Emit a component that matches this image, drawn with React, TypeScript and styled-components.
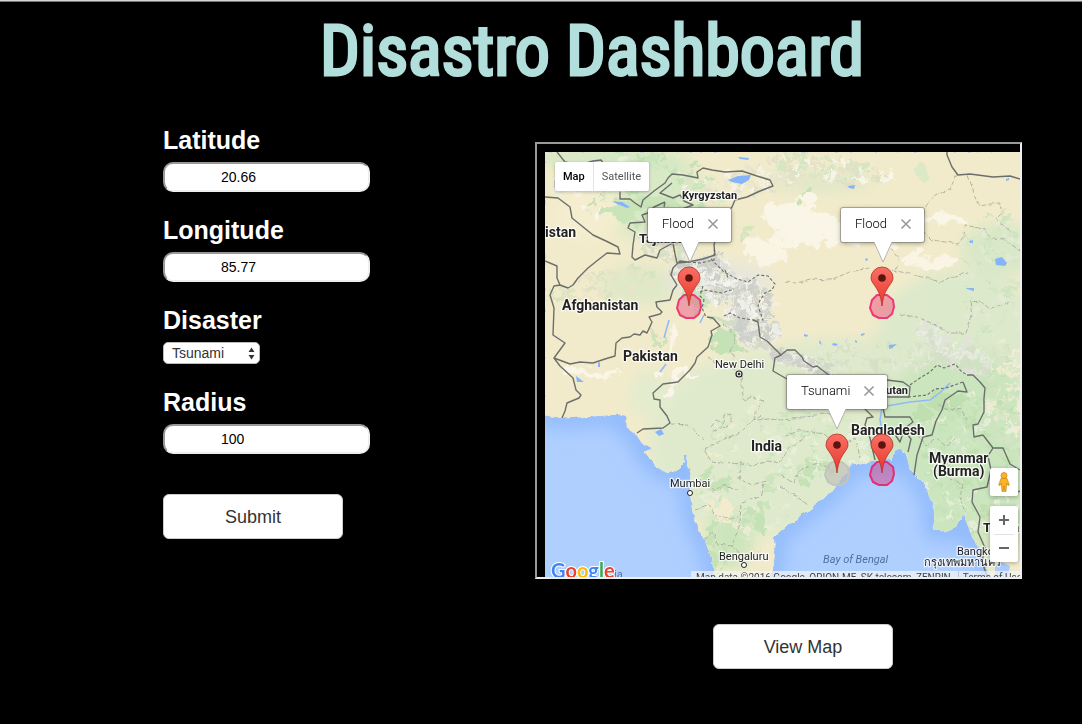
import React from "react";
import styled, { createGlobalStyle } from "styled-components";

const GlobalStyle = createGlobalStyle`
  *, *::before, *::after { box-sizing: border-box; }
  html { background: #000; }
  body { margin: 0; background: #000; font-family: "Liberation Sans", Arial, sans-serif; color: #fff; }
`;

const Page = styled.div`
  min-height: 100vh;
  border-top: 1px solid #d4d4d4;
  box-shadow: inset 0 1px 0 #777;
`;

const Header = styled.header`
  padding: 5px 0 0 102px;
  text-align: center;
`;

const Title = styled.h1`
  margin: 0;
  height: 120px;
  line-height: 90px;
  font-family: "Roboto Condensed", "Liberation Sans Narrow", Roboto, sans-serif;
  font-size: 70px;
  font-weight: 400;
  -webkit-text-stroke: 3px #b2dfdb;
  white-space: nowrap;
  color: #b2dfdb;
`;

const Main = styled.main`
  display: grid;
  grid-template-columns: 372px minmax(0, 1fr);
  padding: 0 60px 55px 163px;
`;

const Form = styled.form`
  display: flex;
  flex-direction: column;
  align-items: flex-start;
  gap: 24px;
`;

const Field = styled.div`
  display: flex;
  flex-direction: column;
  align-items: flex-start;
  gap: 8px;
`;

const Label = styled.label`
  font-size: 25px;
  line-height: 28px;
  font-weight: 700;
`;

const TextInput = styled.input`
  width: 207px;
  height: 30px;
  padding: 0 8px 0 56px;
  border: 2px solid;
  border-color: #9a9797 #eee #eee #9a9797;
  border-radius: 10px;
  background: #fff;
  color: #000;
  font: 14px "Liberation Sans", Arial, sans-serif;
`;

const SelectWrap = styled.div`
  position: relative;
  display: flex;
  svg { position: absolute; right: 5px; top: 5px; pointer-events: none; }
`;

const Select = styled.select`
  appearance: none;
  width: 97px;
  height: 22px;
  padding: 0 18px 0 8px;
  border: 1px solid #bbb;
  border-radius: 5px;
  background: #fff;
  color: #333;
  font: 14px "Liberation Sans", Arial, sans-serif;
`;

const Button = styled.button`
  width: 180px;
  height: 45px;
  padding: 2px 0 0;
  border: 1px solid #ccc;
  border-radius: 6px;
  background: #fff;
  color: #333;
  font: 18px "Liberation Sans", Arial, sans-serif;
`;

const SubmitRow = styled.div`
  padding-top: 16px;
`;

const MapColumn = styled.section`
  padding-top: 16px;
`;

const MapFrame = styled.div`
  padding: 8px 0 0 8px;
  border: 2px solid;
  border-color: #9a9a9a #eee #eee #9a9a9a;
`;

const MapCanvas = styled.div`
  position: relative;
  height: 425px;
  overflow: hidden;
  background: #afcfff;
  font-family: Roboto, sans-serif;
`;

const MapArt = styled.svg`
  display: block;
  width: 100%;
  height: 100%;
`;

const ViewRow = styled.div`
  display: flex;
  justify-content: center;
  padding: 45px 0 0 49px;
`;

const TypeControl = styled.div`
  position: absolute;
  left: 10px;
  top: 10px;
  display: flex;
  height: 29px;
  border-radius: 2px;
  background: #fff;
  box-shadow: 0 1px 3px rgba(0, 0, 0, 0.3);
`;

const TypeButton = styled.button<{ $active?: boolean }>`
  border: 0;
  padding: 0 8px;
  background: transparent;
  font: ${(p) => (p.$active ? 500 : 400)} 11px Roboto, sans-serif;
  color: ${(p) => (p.$active ? "#000" : "#565656")};
  & + & { border-left: 1px solid #e4e4e4; }
`;

const InfoWindow = styled.div<{ $x: number; $y: number; $w: number }>`
  position: absolute;
  left: ${(p) => p.$x}px;
  top: ${(p) => p.$y}px;
  width: ${(p) => p.$w}px;
  height: 34px;
  display: flex;
  align-items: center;
  justify-content: space-between;
  padding: 0 12px 3px 14px;
  border-radius: 2px;
  background: #fff;
  box-shadow: 0 0 0 1px rgba(90, 90, 90, 0.4), 0 1px 5px rgba(0, 0, 0, 0.4);
  color: #000;
  font-size: 13px;
  font-weight: 300;
`;

const Tail = styled.svg`
  position: absolute;
  left: calc(50% - 9px);
  top: 34px;
`;

const CloseButton = styled.button`
  display: flex;
  padding: 0;
  border: 0;
  background: none;
`;

const SideControls = styled.div`
  position: absolute;
  right: 2px;
  top: 316px;
  display: flex;
  flex-direction: column;
  gap: 10px;
`;

const ControlBox = styled.div`
  display: flex;
  flex-direction: column;
  width: 28px;
  border-radius: 2px;
  background: #fff;
  box-shadow: 0 1px 4px rgba(0, 0, 0, 0.3);
`;

const ControlButton = styled.button`
  display: flex;
  align-items: center;
  justify-content: center;
  height: 28px;
  padding: 0;
  border: 0;
  background: none;
`;

const Divider = styled.span`
  height: 1px;
  margin: 0 4px -1px;
  background: #e2e2e2;
`;

const Attribution = styled.div`
  position: absolute;
  right: 0;
  bottom: -8px;
  display: flex;
  gap: 7px;
  width: 329px;
  height: 14px;
  padding-left: 5px;
  background: rgba(245, 245, 245, 0.7);
  color: #444;
  font-size: 10px;
  line-height: 14px;
  white-space: nowrap;
  a { color: #444; text-decoration: none; padding-left: 4px; border-left: 1px solid #b9c4d6; }
`;

const LAND =
  "M545 152H1400V577H990L987 566L980 548L973 538L968 525L963 513L957 525L945 532L933 528L936 518L933 505L928 495L925 485L917 477L910 468L907 455L900 448L895 450L890 461L884 456L880 463L873 460L862 464L852 463L848 472L837 483L830 493L820 500L810 509L800 515L794 523L787 525L780 531L773 538L775 548L773 568L770 577H715L712 558L707 545L697 525L693 512L690 492L691 472L687 465V455H683L684 461L680 467L674 471L668 473L657 467L645 452L653 448L642 443L637 435L627 428V418L620 414L580 417L563 418L545 415Z";

const BORDERS = [
  "M557 152L565 162L580 165L593 161L601 160L610 172L620 190V199H630L635 203L641 207L643 200L654 191L665 183L668 178L672 174L683 175L698 178L697 172L703 168L712 170L725 172L742 171L757 176L770 180L773 186L760 191L747 197L735 200L732 207L724 216L718 230L714 245L715 255L703 259L688 262L680 261L673 268L671 275L677 285",
  "M672 183L660 193L673 198L680 195L684 201L693 205L682 209L700 210",
  "M665 202L654 207L648 213L642 215L645 222L630 223L628 228L635 232L633 245L632 257L635 260L645 255L657 258L660 250L673 243L675 254L677 263L688 262M665 202L664 207",
  "M545 197L558 198L570 207L572 218L593 235L606 241L618 247L620 254L607 253L598 260L588 268L578 278L573 285L568 288L560 285L557 278V266L545 261",
  "M560 285L554 286L550 295L554 308L553 335L565 343L554 358L560 366L573 378L576 390L581 395L579 398L567 403L565 411L562 418",
  "M554 358L570 364L580 362L593 363L605 359L615 356L616 343L622 338L630 337L634 334L640 335L643 331L647 333L652 322L649 317L660 314L662 312L657 307L656 302L670 300L673 290L677 285",
  "M707 317L713 318L720 326L711 331L712 335L708 347L697 357L695 363L690 370L684 376L678 382L663 384L653 393L654 399L660 400V407L667 416L670 423L663 428L643 429L637 433",
  "M753 320L758 322L760 337L767 341L771 345L781 355L787 350L795 350L802 357L804 361L813 367L817 366L830 376L845 380L864 384L883 386L887 380L903 382L910 387L909 397H887L884 390",
  "M781 355L775 358L773 371L787 379L800 391L830 399L850 403L864 408L873 417L867 418L865 425L870 438L875 460",
  "M883 408L885 417L910 417L913 422L905 428M967 375L973 375L980 382L985 388L984 398V412L978 424L973 425L974 437L983 435",
  "M963 382L967 392L958 391L945 400L942 410L936 421L932 435L923 437L917 455L914 475M894 433L900 442L904 430L911 439L908 452",
  "M983 435L993 448L988 456L991 470L987 487L973 490L972 502L980 517L978 532L985 548L982 561L987 577M1020 470L1010 464L1003 448L993 448M1020 491L1012 495L1009 487",
  "M947 152V155L952 167L958 175L970 174L993 177L1010 176L1020 179",
];

const DASHED = [
  "M688 262L700 263L714 260L714 250M711 259L724 272L737 279L748 282L758 275L768 276L775 284L772 290L765 293L760 300L758 306L763 320L753 320",
  "M700 292L704 290L722 293L734 289M725 270L728 278M703 286L700 296L704 300L702 308L706 317M724 316L730 313L740 318L753 320",
  "M910 385L920 378L930 372L937 365L944 368L955 364L961 371L967 375",
  "M908 397L927 395L935 389L946 388L963 382",
];

const PROVINCES = [
  "M957 175L949 190L935 195L926 206L923 218M968 175L974 193L980 206L990 204L1000 204L1002 213L996 219L1011 232",
  "M924 232L932 240L945 242L958 244L964 236L965 225L983 229L991 238L1004 239L1020 251",
  "M785 282L797 283L810 279L830 280L850 272L869 268M890 248L898 258L897 268L892 270L915 275L941 282L954 276L968 273",
  "M900 314L920 318L933 324L949 333L966 333L972 316L970 302L980 301L990 309L1010 302",
  "M707 357L716 362L724 361L741 375L742 389L744 401L751 397L763 402L755 412L754 420L769 419L780 420L803 418L815 415L833 413",
  "M724 324L736 337L731 350L734 360",
  "M711 427L716 421L723 424L724 415L731 414V421L727 427L719 428L712 432M671 424L687 425L697 434L704 440",
  "M704 450L718 442L742 431L752 421L761 416M704 450L711 461L742 464L752 466L768 461L780 463L789 448L806 437",
  "M742 461L739 479L752 485L765 481L760 496L741 502L740 524L732 546L744 557L762 551",
  "M784 437L800 430L824 434L838 446L856 438L860 458M781 475L793 483L800 470L817 463L830 468M780 486L797 497L808 505",
  "M700 479L716 491L723 485L739 491M696 510L709 504L714 514L731 519L741 514M704 540L713 532L718 544L732 546",
  "M917 434L926 446L935 438L946 446L955 439M950 479L963 484L960 497L965 512M938 404L950 411L961 408L967 420",
];

/* Land cover, from broad ground colour to smaller patches: x, y, rx, ry, fill. */
type Patch = [number, number, number, number, string];
const GROUND: Patch[] = [
  [760, 445, 110, 92, "#dfeacd"], [850, 380, 120, 42, "#dfe9cb"], [960, 340, 85, 70, "#dde9cb"],
  [960, 460, 90, 110, "#cbe5be"], [645, 195, 60, 42, "#d8e9c5"], [1000, 250, 40, 28, "#d9e8c8"],
  [650, 395, 22, 26, "#e4ecce"], [640, 285, 40, 20, "#dfe8c8"], [610, 158, 80, 10, "#d3e7c4"],
  [590, 213, 34, 26, "#f4edcf"], [820, 182, 55, 12, "#e2e8c9"], [720, 280, 55, 20, "#e8e7da"],
  [745, 325, 20, 22, "#e5e7d8"], [985, 540, 15, 32, "#d3e6bf"], [730, 540, 24, 30, "#cde5bd"],
];
const PATCHES: Patch[] = [
  [800, 222, 34, 22, "#faf6e7"], [850, 232, 60, 12, "#faf6e7"], [940, 219, 26, 5, "#faf6e7"],
  [930, 262, 26, 7, "#f9f4e3"], [765, 250, 24, 14, "#f9f4e3"], [890, 178, 9, 4, "#faf6e7"],
  [575, 180, 15, 10, "#f8f2df"], [600, 214, 10, 5, "#faf6e7"], [590, 373, 36, 5, "#faf5e6"],
  [683, 375, 20, 4, "#faf5e6"], [668, 392, 8, 12, "#faf5e6"], [670, 335, 4, 14, "#faf5e6"],
  [721, 344, 12, 10, "#c5e1b6"], [735, 348, 8, 5, "#c5e1b6"], [708, 470, 9, 7, "#c5e1b6"],
  [718, 486, 10, 7, "#c5e1b6"], [755, 524, 14, 9, "#c5e1b6"], [766, 512, 9, 12, "#c5e1b6"],
  [716, 508, 13, 8, "#f2ebcd"], [722, 518, 10, 4, "#f2ebcd"], [714, 455, 6, 3, "#f2ebcd"],
  [710, 535, 5, 12, "#c5e1b6"], [720, 560, 6, 14, "#c5e1b6"], [620, 213, 20, 8, "#cae4ba"],
  [655, 205, 22, 10, "#cae4ba"], [640, 165, 26, 7, "#cae4ba"], [920, 172, 8, 8, "#dbe9c6"],
  [802, 196, 5, 5, "#c8e2b6"], [743, 235, 3, 9, "#d5e6bf"], [820, 465, 14, 7, "#c5e1b6"],
  [806, 482, 10, 6, "#c5e1b6"], [945, 400, 18, 5, "#bfdfb0"], [925, 415, 10, 8, "#bfdfb0"],
  [655, 338, 3, 8, "#cce2b8"], [700, 300, 10, 14, "#cde3bd"], [725, 320, 22, 5, "#cfe2c0"],
];

/* Deterministic noise so the relief looks the same on every render. */
function makeRandom(seed: number) {
  let s = seed;
  return () => {
    s = (s * 16807) % 2147483647;
    return s / 2147483647;
  };
}

type Relief = { x: number; y: number; rx: number; ry: number; n: number; tilt: number; colors: string[] };
const SNOW = ["#f8f8f5", "#d6d8d2", "#ccd2c4", "#f1f0ea", "#c9cbc5"];
const GREEN = ["#bddfaf", "#c4e2b6", "#eaf0dd", "#d3e8c5"];
const RELIEF: Relief[] = [
  { x: 722, y: 285, rx: 50, ry: 19, n: 240, tilt: 0.45, colors: SNOW },
  { x: 750, y: 325, rx: 32, ry: 18, n: 130, tilt: 0.8, colors: SNOW },
  { x: 695, y: 266, rx: 28, ry: 10, n: 60, tilt: -0.2, colors: SNOW },
  { x: 735, y: 182, rx: 56, ry: 14, n: 90, tilt: -0.1, colors: ["#e8e5cf", "#f8f5e8", "#dee0c6"] },
  { x: 825, y: 168, rx: 60, ry: 12, n: 110, tilt: 0.15, colors: ["#d8e4c5", "#cfe4bf", "#faf7ec", "#e3ddc4"] },
  { x: 800, y: 362, rx: 36, ry: 7, n: 70, tilt: 0.3, colors: SNOW },
  { x: 880, y: 357, rx: 75, ry: 14, n: 90, tilt: 0, colors: ["#d9e0c8", "#e6eadb", "#d4dec4"] },
  { x: 952, y: 350, rx: 45, ry: 16, n: 110, tilt: 0.6, colors: ["#ecece5", "#d6dccb", "#e1e4d8"] },
  { x: 1002, y: 390, rx: 20, ry: 50, n: 90, tilt: 0, colors: ["#f8eed7", "#c6e1b8", "#dae2c9", "#f2edd5"] },
  { x: 595, y: 285, rx: 60, ry: 14, n: 70, tilt: -0.2, colors: ["#dfe4c6", "#d4e2be", "#ebe4c8"] },
  { x: 665, y: 240, rx: 28, ry: 20, n: 80, tilt: 0, colors: ["#e9e9df", "#d8dccb", "#cae1ba"] },
  { x: 970, y: 465, rx: 55, ry: 75, n: 200, tilt: 0, colors: GREEN },
  { x: 640, y: 190, rx: 90, ry: 36, n: 60, tilt: 0, colors: GREEN },
  { x: 745, y: 470, rx: 50, ry: 75, n: 80, tilt: 0, colors: ["#c8e3b9", "#d3e7c4", "#eeedd5", "#e8eeda"] },
  { x: 810, y: 445, rx: 55, ry: 34, n: 70, tilt: 0, colors: ["#c8e3b9", "#eaf0dd", "#d3e7c4"] },
  { x: 990, y: 280, rx: 35, ry: 70, n: 80, tilt: 0, colors: ["#cae2bd", "#d3e6c5", "#e5ebd8"] },
];

function reliefPaths() {
  const random = makeRandom(4127);
  return RELIEF.flatMap((r, k) => {
    const paths = r.colors.map(() => "");
    for (let i = 0; i < r.n; i += 1) {
      const a = random() * Math.PI * 2;
      const d = Math.sqrt(random());
      const u = Math.cos(a) * d * r.rx;
      const v = Math.sin(a) * d * r.ry;
      const x = (r.x + u * Math.cos(r.tilt) - v * Math.sin(r.tilt)).toFixed(1);
      const y = (r.y + u * Math.sin(r.tilt) + v * Math.cos(r.tilt)).toFixed(1);
      const w = 2 + random() * 6;
      const h = 2 + random() * 4;
      paths[i % r.colors.length] += `M${x} ${y}l${w.toFixed(1)} ${(-h / 2).toFixed(1)}l${(w / 2).toFixed(1)} ${h.toFixed(1)}l${(-w).toFixed(1)} ${(h / 2).toFixed(1)}z`;
    }
    return paths.map((d, j) => <path key={`${k}-${j}`} d={d} fill={r.colors[j]} opacity="0.8" />);
  });
}

const WATER =
  "M728 180L738 176L751 175L749 180L742 184L732 182ZM612 201L622 202L630 207L627 208L617 204ZM738 157L749 158L748 160L740 159ZM848 186L855 185L854 189L849 188ZM995 259L1002 257L1007 263L1005 266L996 265ZM969 241L973 240V243H970ZM889 345L897 344L892 348L889 349ZM833 343L838 344L836 346L832 345ZM846 342L848 337L845 343ZM861 334L865 333L864 335L861 336ZM966 288H974V291L967 289ZM576 376L584 382H577ZM598 363L600 362V367H598ZM655 432L661 429L664 434L659 436ZM866 258L868 259L867 261L865 260ZM1006 179L1009 178V180L1006 181ZM855 340L857 341V343L855 342ZM804 334L808 335L807 337L804 336ZM820 340L822 345L819 343Z";

type Place = { text: string; x: number; y: number; size: number; kind?: "city" | "end" };
const PLACES: Place[] = [
  { text: "Uzbekistan", x: 554, y: 191, size: 14 },
  { text: "Turkmenistan", x: 576, y: 237, size: 14, kind: "end" },
  { text: "Kyrgyzstan", x: 682, y: 199, size: 11 },
  { text: "Tajikistan", x: 639, y: 243, size: 13 },
  { text: "Afghanistan", x: 562, y: 310, size: 14 },
  { text: "Pakistan", x: 623, y: 361, size: 14 },
  { text: "India", x: 751, y: 451, size: 14 },
  { text: "Bhutan", x: 908, y: 394, size: 11, kind: "end" },
  { text: "Bangladesh", x: 851, y: 435, size: 14 },
  { text: "Myanmar", x: 929, y: 463, size: 14 },
  { text: "(Burma)", x: 933, y: 476, size: 14 },
  { text: "Thailand", x: 983, y: 532, size: 13 },
  { text: "New Delhi", x: 715, y: 368, size: 11, kind: "city" },
  { text: "Mumbai", x: 670, y: 487, size: 11, kind: "city" },
  { text: "Bengaluru", x: 719, y: 560, size: 11, kind: "city" },
  { text: "Bangkok", x: 957, y: 555, size: 11, kind: "city" },
  { text: "กรุงเทพมหานคร", x: 924, y: 566, size: 11, kind: "city" },
];

const PIN = "M0 0C-1 -9 -3 -14 -7 -20C-9 -23 -11 -25 -11 -28A11 11 0 0 1 11 -28C11 -25 9 -23 7 -20C3 -14 1 -9 0 0Z";

type Spot = { x: number; y: number; fill: string; stroke: string };
const SPOTS: Spot[] = [
  { x: 689, y: 306, fill: "rgba(233,87,131,.5)", stroke: "#ee3a74" },
  { x: 882, y: 306, fill: "rgba(240,80,125,.5)", stroke: "#ee3a74" },
  { x: 837, y: 473, fill: "rgba(190,190,185,.65)", stroke: "#c3c5bc" },
  { x: 882, y: 473, fill: "rgba(215,70,135,.5)", stroke: "#e22f76" },
];

const GOOGLE: [string, string][] = [
  ["G", "#4285f4"], ["o", "#ea4335"], ["o", "#fbbc05"], ["g", "#4285f4"], ["l", "#34a853"], ["e", "#ea4335"],
];

function ellipses(list: Patch[]) {
  return list.map(([x, y, rx, ry, fill], i) => <ellipse key={i} cx={x} cy={y} rx={rx} ry={ry} fill={fill} />);
}

function Terrain() {
  return (
    <MapArt aria-label="Map of South Asia">
      <defs>
        <clipPath id="land"><path d={LAND} /></clipPath>
        <filter id="ground" x="-20%" y="-20%" width="140%" height="140%"><feGaussianBlur stdDeviation="7" /></filter>
        <filter id="shore" x="-20%" y="-20%" width="140%" height="140%"><feGaussianBlur stdDeviation="10" /></filter>
        <filter id="patch">
          <feTurbulence type="fractalNoise" baseFrequency="0.05" numOctaves="4" seed="3" />
          <feDisplacementMap in="SourceGraphic" scale="34" xChannelSelector="R" yChannelSelector="G" />
          <feGaussianBlur stdDeviation="0.5" />
        </filter>
        <filter id="relief">
          <feTurbulence type="fractalNoise" baseFrequency="0.14" numOctaves="3" seed="8" />
          <feDisplacementMap in="SourceGraphic" scale="14" xChannelSelector="R" yChannelSelector="G" />
          <feGaussianBlur stdDeviation="0.5" />
        </filter>
        <filter id="coast">
          <feTurbulence type="fractalNoise" baseFrequency="0.15" numOctaves="2" seed="5" />
          <feDisplacementMap in="SourceGraphic" scale="4" xChannelSelector="R" yChannelSelector="G" />
        </filter>
        <linearGradient id="pin" x1="0" y1="0" x2="0" y2="1">
          <stop offset="0" stopColor="#fb7064" />
          <stop offset="1" stopColor="#e6352b" />
        </linearGradient>
      </defs>
      <g transform="translate(-545 -152)">
        <path d={LAND} fill="none" stroke="#8cb7fb" strokeWidth="18" filter="url(#shore)" />
        <g filter="url(#coast)">
          <path d={LAND} fill="#f2ebcb" stroke="#f2ebcb" />
          <g clipPath="url(#land)">
            <g filter="url(#ground)">{ellipses(GROUND)}</g>
            <g filter="url(#patch)">{ellipses(PATCHES)}</g>
            <g filter="url(#relief)">{reliefPaths()}</g>
          </g>
        </g>
        <path d="M995 577V566L1002 562L1010 566L1008 577Z" fill="#a9cbff" />
        <path d={WATER} fill="#86b4fb" />
        <path d="M882 408L880 420L882 430L886 437M887 406L910 402L930 400L942 391L950 383M664 338L669 320M660 372L666 364M700 323L704 315" fill="none" stroke="#8fbaf8" strokeWidth="1.5" />
        <path d={PROVINCES.join("")} fill="none" stroke="#a3a59a" strokeWidth="0.8" strokeDasharray="5 2" filter="url(#coast)" />
        <path d={BORDERS.join("")} fill="none" stroke="#6c6e6a" strokeWidth="1.4" strokeLinejoin="round" />
        <path d={DASHED.join("")} fill="none" stroke="#6c6e6a" strokeWidth="1.1" strokeDasharray="3 2" />
        {PLACES.map((p) => (
          <text
            key={p.text}
            x={p.x}
            y={p.y}
            fontSize={p.size}
            fontWeight={p.kind === "city" ? 400 : 700}
            textAnchor={p.kind === "end" ? "end" : "start"}
            fill="#222"
            stroke="#fff"
            strokeOpacity="0.75"
            strokeWidth="2.5"
            strokeLinejoin="round"
            paintOrder="stroke"
          >
            {p.text}
          </text>
        ))}
        <text x="823" y="563" fontSize="11" fontStyle="italic" fill="#4f709f">Bay of Bengal</text>
        <text x="614" y="578" fontSize="11" fill="#4f709f">ia</text>
        <g fill="#fff" stroke="#222">
          <circle cx="739" cy="374" r="3" strokeWidth="1.2" />
          <circle cx="739" cy="374" r="1" fill="#222" />
          <circle cx="690" cy="493" r="2.5" />
          <circle cx="744" cy="565" r="2.5" />
        </g>
        {SPOTS.map((s) => (
          <g key={`${s.x}-${s.y}`} transform={`translate(${s.x} ${s.y})`}>
            <path
              d="M-5 -11L5 -11L11 -6L12 1L10 8L5 12L-3 12L-9 9L-12 2L-10 -6Z"
              fill={s.fill}
              stroke={s.stroke}
              strokeWidth="2"
              strokeLinejoin="round"
            />
            <path d={PIN} fill="url(#pin)" stroke="#b0342b" strokeWidth="0.8" />
            <circle cy="-28" r="3.8" fill="#5c1411" />
          </g>
        ))}
        <text x="551" y="578" fontSize="20" fontFamily="Lato, sans-serif" fontWeight="700" stroke="#fff" strokeWidth="2" paintOrder="stroke">
          {GOOGLE.map(([c, fill], i) => <tspan key={i} fill={fill}>{c}</tspan>)}
        </text>
      </g>
    </MapArt>
  );
}

function Info({ text, x, y, w }: { text: string; x: number; y: number; w: number }) {
  return (
    <InfoWindow $x={x} $y={y} $w={w}>
      {text}
      <CloseButton type="button" aria-label={`Close ${text}`}>
        <svg width="12" height="12" viewBox="0 0 12 12" stroke="#999" strokeWidth="1.6"><path d="M1.5 1.5L10.5 10.5M10.5 1.5L1.5 10.5" /></svg>
      </CloseButton>
      <Tail width="18" height="21" viewBox="0 0 18 21">
        <path d="M0 0L9 20L18 0" fill="#fff" stroke="#999" strokeWidth="0.7" />
        <path d="M1 -1H17V1H1Z" fill="#fff" />
      </Tail>
    </InfoWindow>
  );
}

function NumberField({ id, label, value }: { id: string; label: string; value: string }) {
  return (
    <Field>
      <Label htmlFor={id}>{label}</Label>
      <TextInput id={id} defaultValue={value} />
    </Field>
  );
}

export default function App() {
  return (
    <Page>
      <GlobalStyle />
      <Header><Title>Disastro Dashboard</Title></Header>
      <Main>
        <Form onSubmit={(e) => e.preventDefault()}>
          <NumberField id="latitude" label="Latitude" value="20.66" />
          <NumberField id="longitude" label="Longitude" value="85.77" />
          <Field>
            <Label htmlFor="disaster">Disaster</Label>
            <SelectWrap>
              <Select id="disaster" defaultValue="Tsunami">
                <option>Tsunami</option>
                <option>Flood</option>
              </Select>
              <svg width="7" height="13" viewBox="0 0 7 13" fill="#333"><path d="M0.5 5L3.5 0.5L6.5 5ZM0.5 8L3.5 12.5L6.5 8Z" /></svg>
            </SelectWrap>
          </Field>
          <NumberField id="radius" label="Radius" value="100" />
          <SubmitRow><Button type="submit">Submit</Button></SubmitRow>
        </Form>
        <MapColumn>
          <MapFrame>
            <MapCanvas>
              <Terrain />
              <TypeControl>
                <TypeButton type="button" $active>Map</TypeButton>
                <TypeButton type="button">Satellite</TypeButton>
              </TypeControl>
              <Info text="Flood" x={103} y={56} w={83} />
              <Info text="Flood" x={296} y={56} w={83} />
              <Info text="Tsunami" x={242} y={223} w={100} />
              <Attribution>
                <span>Map data ©2016 Google, ORION-ME, SK telecom, ZENRIN</span>
                <a href="#terms">Terms of Use</a>
              </Attribution>
              <SideControls>
                <ControlBox>
                  <ControlButton type="button" aria-label="Street View">
                    <svg width="14" height="20" viewBox="0 0 14 20" fill="#fbb523" stroke="#c98412" strokeWidth="0.7">
                      <path d="M4 6.5H10L12.3 13L11 13.6L9.6 11L9 19.5H7.6L7 14L6.4 19.5H5L4.4 11L3 13.6L1.7 13Z" />
                      <circle cx="7" cy="3.5" r="3" />
                    </svg>
                  </ControlButton>
                </ControlBox>
                <ControlBox>
                  <ControlButton type="button" aria-label="Zoom in">
                    <svg width="12" height="12" viewBox="0 0 12 12" fill="#666"><path d="M5 1H7V5H11V7H7V11H5V7H1V5H5Z" /></svg>
                  </ControlButton>
                  <Divider />
                  <ControlButton type="button" aria-label="Zoom out">
                    <svg width="12" height="12" viewBox="0 0 12 12" fill="#666"><path d="M1 5H11V7H1Z" /></svg>
                  </ControlButton>
                </ControlBox>
              </SideControls>
            </MapCanvas>
          </MapFrame>
          <ViewRow><Button type="button">View Map</Button></ViewRow>
        </MapColumn>
      </Main>
    </Page>
  );
}
